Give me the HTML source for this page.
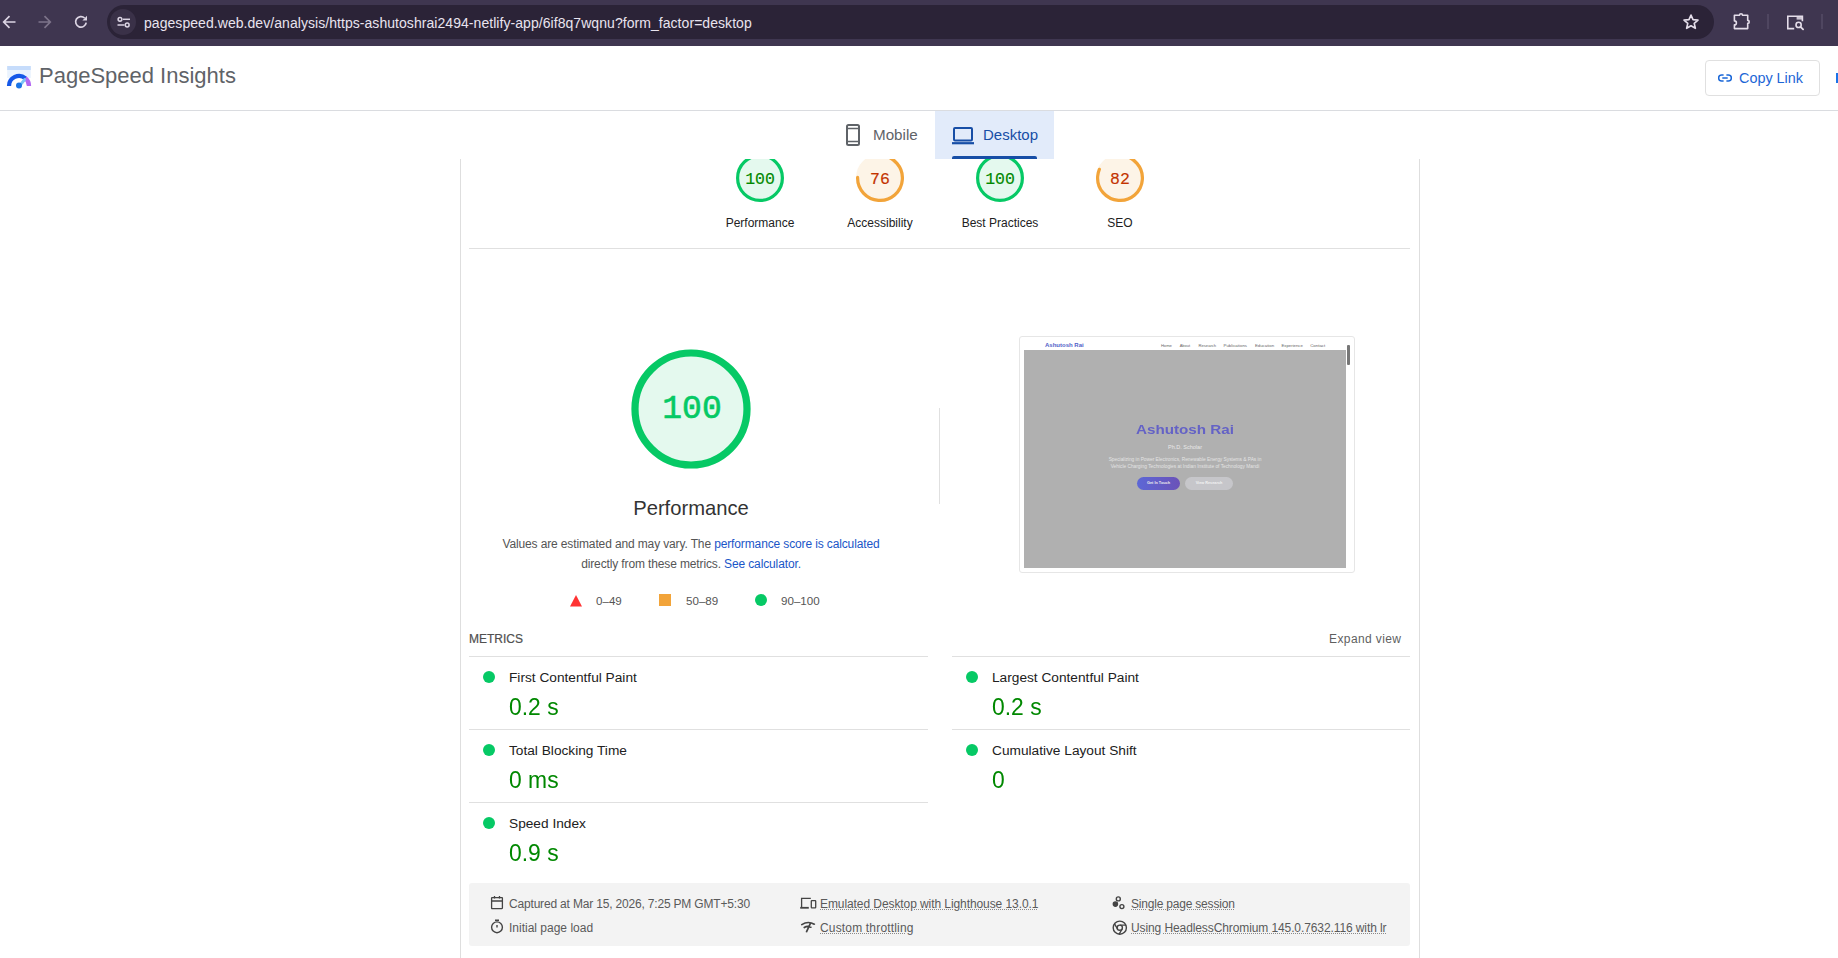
<!DOCTYPE html>
<html><head><meta charset="utf-8">
<style>
*{box-sizing:border-box;margin:0;padding:0}
html,body{width:1838px;height:958px;overflow:hidden;background:#fff;font-family:"Liberation Sans",sans-serif}
.a{position:absolute}
.nw{white-space:nowrap}
#tb{left:0;top:0;width:1838px;height:46px;background:#3f3650}
#pill{left:107px;top:5px;width:1607px;height:33.6px;border-radius:17px;background:#2b2337}
#site{left:110px;top:9px;width:26px;height:26px;border-radius:50%;background:#3a3148}
#url{left:144px;top:13.5px;font-size:14px;letter-spacing:0.055px;color:#e9e4ef;line-height:18px}
#hdr{left:0;top:46px;width:1838px;height:65px;border-bottom:1px solid #dadce0;background:#fff}
#title{left:39px;top:63px;font-size:22px;color:#5f6368;line-height:26px}
#copy{left:1705px;top:60px;width:115px;height:36px;border:1px solid #e0e0e0;border-radius:4px}
#copyt{left:1739px;top:70px;font-size:14.4px;color:#1d66d6;line-height:16px}
.vb{top:159px;width:1px;height:800px;background:#dedede}
.tab{font-size:15px;line-height:18px}
.g-lab{font-size:12px;color:#212121;text-align:center;width:120px;line-height:14px}
.g-num{font-family:"Liberation Mono",monospace;text-align:center}
.hr{height:1px;background:#e0e0e0}
.mlab{font-size:13.7px;color:#212121;line-height:16px}
.mval{font-size:24.6px;color:#008800;line-height:28px;transform:scaleX(0.93);transform-origin:0 0}
.dot{width:12px;height:12px;border-radius:50%;background:#06c965}
.ft{font-size:12px;color:#5a5a5a;line-height:14px}
.ul{text-decoration:underline dotted #8a8a8a;text-underline-offset:1px}
</style></head>
<body>
<!-- browser toolbar -->
<div id="tb" class="a"></div>
<div id="pill" class="a"></div>
<div id="site" class="a"></div>
<div id="url" class="a nw">pagespeed.web.dev/analysis/https-ashutoshrai2494-netlify-app/6if8q7wqnu?form_factor=desktop</div>

<!-- toolbar icons -->
<svg class="a" style="left:0;top:12px" width="20" height="20" viewBox="0 0 20 20"><path d="M15.5 10H4M9.5 4.2L3.7 10l5.8 5.8" fill="none" stroke="#dcd5e4" stroke-width="1.7"/></svg>
<svg class="a" style="left:34px;top:12px" width="20" height="20" viewBox="0 0 20 20"><path d="M4.5 10H16M10.5 4.2l5.8 5.8-5.8 5.8" fill="none" stroke="#7d748a" stroke-width="1.7"/></svg>
<svg class="a" style="left:71px;top:12px" width="20" height="20" viewBox="0 0 20 20"><path d="M15.2 10.6A5.3 5.3 0 1 1 13.6 6" fill="none" stroke="#dcd5e4" stroke-width="1.7"/><path d="M16 3.8v4.6h-4.6z" fill="#dcd5e4"/></svg>
<svg class="a" style="left:113px;top:12px" width="20" height="20" viewBox="0 0 20 20" fill="none" stroke="#dcd5e4" stroke-width="1.5"><circle cx="7" cy="7.3" r="1.9"/><path d="M10 7.3h7"/><circle cx="14.2" cy="13" r="1.9"/><path d="M4.5 13h7"/></svg>
<svg class="a" style="left:1682px;top:13px" width="18" height="18" viewBox="0 0 24 24"><path d="M12 2.8l2.7 6.1 6.6.6-5 4.4 1.5 6.5L12 17l-5.8 3.4 1.5-6.5-5-4.4 6.6-.6z" fill="none" stroke="#e4dde9" stroke-width="2.2" stroke-linejoin="round"/></svg>
<svg class="a" style="left:1732px;top:11px" width="20" height="20" viewBox="0 0 20 20"><path d="M2.4 4.3H7.5A1.5 1.5 0 0 1 10.5 4.3H15.7V9.4A1.5 1.5 0 0 1 15.7 12.4V17.6H2.4V13.9A2 2 0 0 0 2.4 9.9Z" fill="none" stroke="#e4dde9" stroke-width="1.6" stroke-linejoin="round"/></svg>
<div class="a" style="left:1767px;top:14px;width:1.5px;height:15px;background:#4f4660"></div>
<svg class="a" style="left:1785px;top:13px" width="20" height="18" viewBox="0 0 20 18"><path d="M9.2 15.6H2.8V3.2H17.4V8.2" fill="none" stroke="#e4dde9" stroke-width="1.6"/><rect x="11.6" y="3" width="5.8" height="3.6" fill="#e4dde9" opacity="0.85"/><circle cx="13.6" cy="11.9" r="2.6" fill="none" stroke="#e4dde9" stroke-width="1.6"/><path d="M15.5 13.8l2.6 2.6" stroke="#e4dde9" stroke-width="1.8" stroke-linecap="round"/></svg>
<div class="a" style="left:1821px;top:14px;width:1.5px;height:15px;background:#4f4660"></div>
<!-- header -->
<div id="hdr" class="a"></div>
<div id="title" class="a nw">PageSpeed Insights</div>
<div id="copy" class="a"></div>
<svg class="a" style="left:6px;top:64px" width="26" height="26" viewBox="0 0 26 26">
<rect x="1.2" y="2" width="23.6" height="12" fill="#eaf3fe"/><rect x="1.2" y="2" width="23.6" height="4" fill="#c6dcfb"/>
<path d="M3 22A10 10 0 0 1 19.5 14.4" fill="none" stroke="#1558e8" stroke-width="4.3"/>
<path d="M19.3 14.2A10 10 0 0 1 23 22" fill="none" stroke="#b368f2" stroke-width="4.3"/>
<path d="M15.4 19.6L18.6 15.6" stroke="#7cc3f5" stroke-width="3" stroke-linecap="round"/>
<circle cx="13" cy="21.6" r="3" fill="#1a75e6"/>
</svg>
<svg class="a" style="left:1718px;top:74px" width="14" height="8" viewBox="0 0 14 8" fill="none" stroke="#1a67d8" stroke-width="1.5"><path d="M5.6 1H3.6a2.9 2.9 0 0 0 0 5.9h2M8.4 1h2a2.9 2.9 0 0 1 0 5.9h-2M4.3 4h5.4"/></svg>
<div id="copyt" class="a nw">Copy Link</div>
<div class="a" style="left:1836px;top:73px;width:2px;height:10px;background:#1a73e8"></div>

<!-- gauges -->
<svg class="a" style="left:736px;top:154px" width="48" height="48" viewBox="0 0 120 120"><circle r="56" cx="60" cy="60" fill="#e4f9ee" stroke="#e4f9ee" stroke-width="8"/><circle r="56" cx="60" cy="60" fill="none" stroke="#06c965" stroke-width="8"/></svg>
<svg class="a" style="left:856px;top:154px" width="48" height="48" viewBox="0 0 120 120"><circle r="56" cx="60" cy="60" fill="#fdf4e7" stroke="#fdf4e7" stroke-width="8"/><circle r="56" cx="60" cy="60" fill="none" stroke="#f2a43a" stroke-width="8" stroke-linecap="round" stroke-dasharray="259.41 351.86" transform="rotate(-85.907 60 60)"/></svg>
<svg class="a" style="left:976px;top:154px" width="48" height="48" viewBox="0 0 120 120"><circle r="56" cx="60" cy="60" fill="#e4f9ee" stroke="#e4f9ee" stroke-width="8"/><circle r="56" cx="60" cy="60" fill="none" stroke="#06c965" stroke-width="8"/></svg>
<svg class="a" style="left:1096px;top:154px" width="48" height="48" viewBox="0 0 120 120"><circle r="56" cx="60" cy="60" fill="#fdf4e7" stroke="#fdf4e7" stroke-width="8"/><circle r="56" cx="60" cy="60" fill="none" stroke="#f2a43a" stroke-width="8" stroke-linecap="round" stroke-dasharray="280.52 351.86" transform="rotate(-85.907 60 60)"/></svg>
<div class="a g-num nw" style="left:730px;top:172px;width:60px;font-size:16.5px;line-height:16.5px;color:#008800;-webkit-text-stroke:0.15px #008800">100</div>
<div class="a g-num nw" style="left:850px;top:172px;width:60px;font-size:16.5px;line-height:16.5px;color:#c33300;-webkit-text-stroke:0.15px #c33300">76</div>
<div class="a g-num nw" style="left:970px;top:172px;width:60px;font-size:16.5px;line-height:16.5px;color:#008800;-webkit-text-stroke:0.15px #008800">100</div>
<div class="a g-num nw" style="left:1090px;top:172px;width:60px;font-size:16.5px;line-height:16.5px;color:#c33300;-webkit-text-stroke:0.15px #c33300">82</div>
<svg class="a" style="left:631.4px;top:349.3px" width="120" height="120" viewBox="0 0 120 120"><circle r="56" cx="60" cy="60" fill="#e4f9ee" stroke="#e4f9ee" stroke-width="7.2"/><circle r="56" cx="60" cy="60" fill="none" stroke="#06c965" stroke-width="7.2"/></svg>
<div class="a g-num nw" style="left:592px;top:393px;width:200px;font-size:33px;line-height:33px;color:#06c965;-webkit-text-stroke:0.6px #06c965">100</div>
<div class="a" style="left:0;top:111px;width:1838px;height:48px;background:#fff"></div>
<!-- tabs -->
<div class="a" style="left:935px;top:111px;width:119px;height:48px;background:#e2ebfa"></div>
<div class="a" style="left:952px;top:156px;width:85px;height:3px;background:#174ea6;border-radius:2px 2px 0 0"></div>
<svg class="a" style="left:845px;top:123px" width="16" height="24" viewBox="0 0 16 24" fill="none" stroke="#5f6368" stroke-width="2"><rect x="2" y="2" width="12" height="20" rx="1.5"/><path d="M2 5.5h12M2 18.5h12" stroke-width="1.4"/></svg>
<svg class="a" style="left:951px;top:125px" width="24" height="20" viewBox="0 0 24 20" fill="none" stroke="#174ea6" stroke-width="2"><rect x="3" y="3" width="18" height="12.5" rx="1"/><path d="M1 18.2h22" stroke-width="2.2"/></svg>
<div class="a nw tab" style="left:873px;top:126px;color:#5f6368;font-size:15.2px">Mobile</div>
<div class="a nw tab" style="left:983px;top:126px;color:#174ea6">Desktop</div>

<!-- container borders -->
<div class="a vb" style="left:460px"></div>
<div class="a vb" style="left:1419px"></div>

<!-- small gauges -->
<div class="a g-lab nw" style="left:700px;top:216px">Performance</div>
<div class="a g-lab nw" style="left:820px;top:216px">Accessibility</div>
<div class="a g-lab nw" style="left:940px;top:216px">Best Practices</div>
<div class="a g-lab nw" style="left:1060px;top:216px">SEO</div>
<div class="a hr" style="left:469px;top:248px;width:941px"></div>

<!-- big gauge -->
<div class="a nw" style="left:591px;top:497px;width:200px;text-align:center;font-size:20.2px;color:#333;line-height:22px">Performance</div>
<div class="a nw" style="left:491px;top:533.5px;width:400px;text-align:center;font-size:12px;letter-spacing:-0.13px;color:#555;line-height:20px">Values are estimated and may vary. The <span style="color:#1a56c8">performance score is calculated</span><br>directly from these metrics. <span style="color:#1a56c8">See calculator.</span></div>
<div class="a" style="left:939px;top:408px;width:1px;height:96px;background:#e0e0e0"></div>

<!-- legend -->
<svg class="a" style="left:569px;top:594px" width="14" height="13" viewBox="0 0 14 13"><path d="M7 1L13 12.5H1z" fill="#ff3333"/></svg>
<div class="a" style="left:659px;top:594px;width:12px;height:12px;background:#f2a43a"></div>
<div class="a" style="left:755px;top:594px;width:12px;height:12px;border-radius:50%;background:#06c965"></div>
<div class="a nw ft" style="left:596px;top:594px;color:#555;font-size:11.6px">0–49</div>
<div class="a nw ft" style="left:686px;top:594px;color:#555;font-size:11.6px">50–89</div>
<div class="a nw ft" style="left:781px;top:594px;color:#555;font-size:11.6px">90–100</div>
<!-- screenshot -->
<div class="a" style="left:1019px;top:336px;width:336px;height:237px;border:1px solid #e6e6e6;border-radius:3px;background:#fff"></div>
<div class="a" style="left:1024px;top:350px;width:322px;height:218px;background:#b0b0b0"></div>

<div class="a nw" style="left:1045px;top:342px;font-size:6px;font-weight:bold;color:#4f5fc8;line-height:7px">Ashutosh Rai</div>
<div class="a nw" style="left:1160.9px;top:343px;font-size:4.12px;color:#666;line-height:5px">Home</div>
<div class="a nw" style="left:1179.7px;top:343px;font-size:3.98px;color:#666;line-height:5px">About</div>
<div class="a nw" style="left:1198.5px;top:343px;font-size:4.14px;color:#666;line-height:5px">Research</div>
<div class="a nw" style="left:1223.5px;top:343px;font-size:4.36px;color:#666;line-height:5px">Publications</div>
<div class="a nw" style="left:1254.9px;top:343px;font-size:4.34px;color:#666;line-height:5px">Education</div>
<div class="a nw" style="left:1281.5px;top:343px;font-size:4.28px;color:#666;line-height:5px">Experience</div>
<div class="a nw" style="left:1310.2px;top:343px;font-size:4.38px;color:#666;line-height:5px">Contact</div>
<div class="a" style="left:1347px;top:345px;width:3px;height:20px;background:#777;border-radius:1px"></div>
<div class="a nw" style="left:1085px;top:422px;width:200px;text-align:center;font-size:13px;font-weight:bold;color:#6462c6;line-height:16px;transform:scaleX(1.17);transform-origin:100px 0;filter:blur(0.25px)">Ashutosh Rai</div>
<div class="a nw" style="left:1135px;top:445px;width:100px;text-align:center;font-size:5.5px;color:#e8e8e8;line-height:5px">Ph.D. Scholar</div>
<div class="a nw" style="left:1085px;top:456px;width:200px;text-align:center;font-size:4.8px;color:#e4e4e4;line-height:7px">Specializing in Power Electronics, Renewable Energy Systems &amp; PAs in<br>Vehicle Charging Technologies at Indian Institute of Technology Mandi</div>
<div class="a" style="left:1137px;top:477px;width:43px;height:13px;border-radius:7px;background:linear-gradient(90deg,#5c67d6,#6b52b8)"></div>
<div class="a nw" style="left:1137px;top:481px;width:43px;text-align:center;font-size:3.8px;color:#eee;line-height:5px;font-weight:bold">Get In Touch</div>
<div class="a" style="left:1185px;top:477px;width:48px;height:13px;border-radius:7px;background:#c6c6ca"></div>
<div class="a nw" style="left:1185px;top:481px;width:48px;text-align:center;font-size:3.8px;color:#f2f2f2;line-height:5px;font-weight:bold">View Research</div>
<!-- metrics -->
<div class="a nw" style="left:469px;top:632px;font-size:12px;letter-spacing:0px;color:#505050;line-height:14px;-webkit-text-stroke:0.2px #505050">METRICS</div>
<div class="a nw" style="left:1329px;top:632px;font-size:12px;letter-spacing:0.4px;color:#5f5f5f;line-height:14px">Expand view</div>
<div class="a hr" style="left:469px;top:656px;width:459px"></div>
<div class="a hr" style="left:469px;top:729px;width:459px"></div>
<div class="a hr" style="left:469px;top:802px;width:459px"></div>
<div class="a hr" style="left:952px;top:656px;width:458px"></div>
<div class="a hr" style="left:952px;top:729px;width:458px"></div>

<div class="a dot" style="left:483px;top:671px"></div>
<div class="a mlab nw" style="left:509px;top:670px">First Contentful Paint</div>
<div class="a mval nw" style="left:509px;top:693px">0.2 s</div>
<div class="a dot" style="left:483px;top:744px"></div>
<div class="a mlab nw" style="left:509px;top:743px">Total Blocking Time</div>
<div class="a mval nw" style="left:509px;top:766px">0 ms</div>
<div class="a dot" style="left:483px;top:817px"></div>
<div class="a mlab nw" style="left:509px;top:816px">Speed Index</div>
<div class="a mval nw" style="left:509px;top:839px">0.9 s</div>

<div class="a dot" style="left:966px;top:671px"></div>
<div class="a mlab nw" style="left:992px;top:670px">Largest Contentful Paint</div>
<div class="a mval nw" style="left:992px;top:693px">0.2 s</div>
<div class="a dot" style="left:966px;top:744px"></div>
<div class="a mlab nw" style="left:992px;top:743px">Cumulative Layout Shift</div>
<div class="a mval nw" style="left:992px;top:766px">0</div>

<!-- footer -->
<div class="a" style="left:469px;top:883px;width:941px;height:63px;background:#f3f3f3;border-radius:3px"></div>
<svg class="a" style="left:490px;top:895px" width="14" height="15" viewBox="0 0 14 15" fill="none" stroke="#444" stroke-width="1.3"><rect x="1.6" y="2.6" width="10.8" height="11" rx="0.5"/><path d="M1.6 6h10.8M4.5 1v2.5M9.5 1v2.5"/></svg>
<svg class="a" style="left:490px;top:919px" width="14" height="15" viewBox="0 0 14 15" fill="none" stroke="#444" stroke-width="1.4"><circle cx="7" cy="8.3" r="5.4"/><path d="M5 1.3h4M7 6v2.6"/></svg>
<svg class="a" style="left:799px;top:896px" width="18" height="14" viewBox="0 0 18 14" fill="none" stroke="#444" stroke-width="1.3"><path d="M2.6 11.5V2.3h9.2"/><path d="M1.2 11.8h8.6" stroke-width="1.8"/><rect x="12.3" y="4.6" width="4.4" height="7.3" rx="0.6"/></svg>
<svg class="a" style="left:800px;top:920px" width="16" height="14" viewBox="0 0 16 14" fill="none" stroke="#444" stroke-width="1.7" stroke-linecap="round"><path d="M1.8 4.6Q8 0.6 14.3 4.2M4.3 7.5Q7.5 5.2 10.8 7.2M10.2 3.8L6.6 11.6"/></svg>
<svg class="a" style="left:1111px;top:895px" width="16" height="15" viewBox="0 0 16 15" stroke="#444" stroke-width="1.4"><circle cx="7.3" cy="3.9" r="2" fill="none"/><circle cx="4.4" cy="9.1" r="2.1" fill="#444"/><circle cx="10.9" cy="11.6" r="2" fill="none"/></svg>
<svg class="a" style="left:1111px;top:919px" width="17" height="17" viewBox="0 0 17 17" fill="none" stroke="#444" stroke-width="1.4"><circle cx="8.8" cy="8.7" r="6.6"/><circle cx="8.8" cy="8.7" r="2.6"/><path d="M8.8 6.1H15M6.5 10L3.4 4.6M11.1 10l-3.1 5.3"/></svg>
<div class="a ft nw" style="left:509px;top:897px;letter-spacing:-0.18px">Captured at Mar 15, 2026, 7:25 PM GMT+5:30</div>
<div class="a ft nw" style="left:509px;top:921px">Initial page load</div>
<div class="a ft nw" style="left:820px;top:897px;letter-spacing:-0.08px"><span class="ul">Emulated Desktop with Lighthouse 13.0.1</span></div>
<div class="a ft nw" style="left:820px;top:921px;letter-spacing:0.17px"><span class="ul">Custom throttling</span></div>
<div class="a ft nw" style="left:1131px;top:897px;letter-spacing:-0.2px"><span class="ul">Single page session</span></div>
<div class="a ft nw" style="left:1131px;top:921px;letter-spacing:-0.1px"><span class="ul">Using HeadlessChromium 145.0.7632.116 with lr</span></div>
</body></html>
